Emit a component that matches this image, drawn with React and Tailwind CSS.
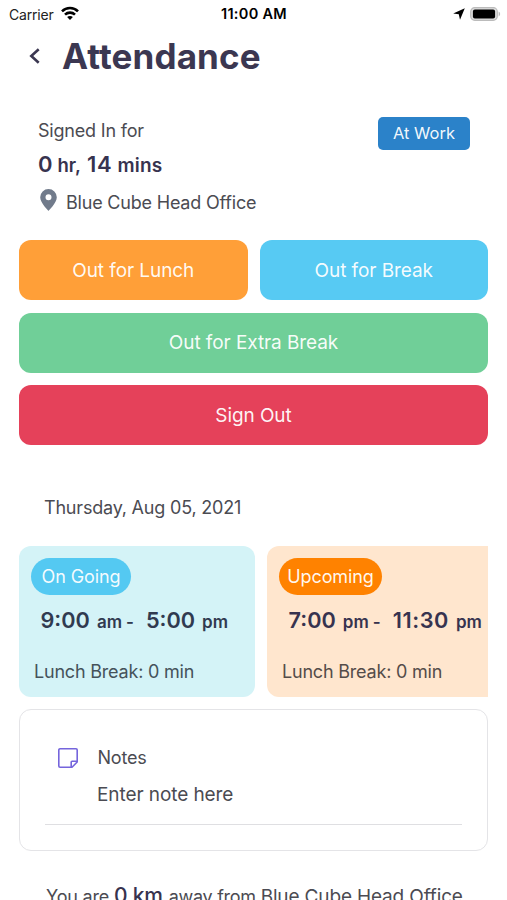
import React from "react";

function StatusBar() {
  return (
    <div className="grid h-7 grid-cols-[1fr_auto_1fr] items-center pl-[9px] pr-[6px] text-[14px] text-[#222]">
      <div className="flex items-center gap-[7px]">
        <span>Carrier</span>
        <svg className="-mt-[2px] h-[14px] w-[18px]" viewBox="0 0 18 14" fill="none" stroke="#000" strokeWidth="2.6">
          <path d="M1 5.3C5.4 .9 12.6 .9 17 5.3" />
          <path d="M4 8.6c2.8-2.7 7.2-2.7 10 0" />
          <path d="M9 14 6.1 11.1c1.6-1.6 4.2-1.6 5.8 0z" fill="#000" stroke="none" />
        </svg>
      </div>
      <span className="-ml-[2px] text-[14.5px] font-semibold tracking-[0.3px] text-black">11:00 AM</span>
      <div className="flex items-center justify-end gap-[5px]">
        <svg className="h-[12px] w-[12px]" viewBox="0 0 12 12">
          <path d="M11.8.2 7 11.8 5.8 6.3.2 5.5z" fill="#000" />
        </svg>
        <svg className="h-[14px] w-[31px]" viewBox="0 0 31 14">
          <rect x=".7" y=".7" width="26.6" height="12.6" rx="4" fill="#ddd" stroke="#bbb" strokeWidth="1.2" />
          <rect x="2.9" y="2.5" width="22.2" height="9" rx="2" fill="#000" />
          <path d="M28.6 4.6c2 .8 2 4 0 4.8z" fill="#bbb" />
        </svg>
      </div>
    </div>
  );
}

function Action({ className, children }) {
  return (
    <button className={"flex h-[60px] items-center justify-center rounded-xl pt-[2px] text-[19px] tracking-[-0.08px] text-white/95 " + className}>
      {children}
    </button>
  );
}

function Shift({ card, badge, label, from, fromUnit, to, toUnit, timeColor, textColor, toClass }) {
  return (
    <div className={"h-[151px] w-[236px] shrink-0 whitespace-nowrap rounded-xl pt-3 " + card}>
      <div className={"ml-3 flex h-[37px] items-center justify-center rounded-full text-[18px] tracking-[-0.1px] text-white/95 " + badge}>
        {label}
      </div>
      <div className={"ml-[21.5px] flex h-[51px] items-center font-semibold " + timeColor}>
        <div className="flex items-baseline text-[17px]">
          <span className="text-[21.7px]">{from}</span>
          <span className="ml-[7px]">{fromUnit}</span>
          <span className="ml-[4px]">-</span>
          <span className={"ml-[12px] text-[21.7px] " + toClass}>{to}</span>
          <span className="ml-[7px]">{toUnit}</span>
        </div>
      </div>
      <div className={"ml-[15px] flex h-[52px] items-center text-[18px] tracking-[-0.2px] " + textColor}>Lunch Break: 0 min</div>
    </div>
  );
}

export default function App() {
  return (
    <div className="h-[900px] w-[507px] overflow-hidden bg-white font-['Inter','Liberation_Sans',sans-serif] text-[18px] tracking-[-0.2px] text-[#4b4b52]">
      <StatusBar />
      <header className="flex h-14 items-center pl-[29px]">
        <svg className="h-4 w-[11px]" viewBox="0 0 11 16" fill="none" stroke="#3b3751" strokeWidth="2.6">
          <path d="M9.7 1.2 2.3 8l7.4 6.8" />
        </svg>
        <h1 className="ml-[22px] text-[35px] font-bold tracking-[0.12px] text-[#3b3751]">Attendance</h1>
      </header>

      <section className="mt-[27px] flex h-[116px] justify-between pl-[38px] pr-[37px]">
        <div>
          <p className="flex h-10 items-center pb-[2px]">Signed In for</p>
          <div className="flex h-[26px] items-center font-semibold tracking-[0px] text-[#37334f]">
            <div className="flex items-baseline text-[19px]">
              <span className="text-[22px]">0</span>
              <span className="ml-[5px] text-[18.5px]">hr,</span>
              <span className="ml-[6px] text-[22px] tracking-[0.8px]">14</span>
              <span className="ml-[5px] tracking-[0.2px]">mins</span>
            </div>
          </div>
          <div className="flex h-[50px] items-center pl-[2px]">
            <svg className="-mt-[5px] h-[22px] w-[17px]" viewBox="0 0 17 22">
              <path d="M8.5 0A8.3 8.3 0 0 0 .2 8.3C.2 14 8.5 22 8.5 22s8.3-8 8.3-13.7A8.3 8.3 0 0 0 8.5 0zm0 11.3a3 3 0 1 1 0-6 3 3 0 0 1 0 6z" fill="#717b8b" fillRule="evenodd" />
            </svg>
            <span className="ml-[9px]">Blue Cube Head Office</span>
          </div>
        </div>
        <div className="mt-[6px] flex h-[33px] w-[92px] items-center justify-center rounded-[5px] bg-[#2b82c9] text-[16.5px] tracking-[0px] text-white/95">
          At Work
        </div>
      </section>

      <section className="mx-[19px] mt-[13px] grid grid-cols-2 gap-x-3 gap-y-[12.5px]">
        <Action className="bg-[#ff9f38]">Out for Lunch</Action>
        <Action className="bg-[#57caf3]">Out for Break</Action>
        <Action className="col-span-2 bg-[#70cf98]">Out for Extra Break</Action>
        <Action className="col-span-2 bg-[#e5415a]">Sign Out</Action>
      </section>

      <p className="ml-[44px] mt-[42px] flex h-10 items-center">Thursday, Aug 05, 2021</p>

      <section className="mx-[19px] mt-[18.5px] flex gap-3 overflow-hidden tracking-[0px]">
        <Shift card="bg-[#d4f3f7]" badge="bg-[#54c9f2] w-[100px]" label="On Going" from="9:00" fromUnit="am" to="5:00" toUnit="pm" timeColor="text-[#303a50]" textColor="text-[#45525a]" toClass="" />
        <Shift card="bg-[#ffe6ce]" badge="bg-[#ff8200] w-[103px]" label="Upcoming" from="7:00" fromUnit="pm" to="11:30" toUnit="pm" timeColor="text-[#37334f]" textColor="text-[#544c49]" toClass="tracking-[0.6px]" />
      </section>

      <section className="mx-[19px] mt-[12.5px] h-[142px] rounded-xl border border-[#e4e4e7] px-[25px] pt-[28px]">
        <div className="flex h-10 items-center pl-[13px]">
          <svg className="h-5 w-5" viewBox="0 0 20 20" fill="none" stroke="#7565dc" strokeWidth="1.6" strokeLinejoin="round">
            <path d="M2 .8h16a1.2 1.2 0 0 1 1.2 1.2v12l-5.2 5.2H2A1.2 1.2 0 0 1 .8 18V2A1.2 1.2 0 0 1 2 .8zM13.2 19v-4.9c0-.5.4-.9.9-.9H19" />
          </svg>
          <span className="-mt-[2px] ml-[19.5px]">Notes</span>
        </div>
        <div className="flex h-[47px] items-center border-b border-[#dfdfe2] pb-[12px] pl-[52px] text-[19px] tracking-[-0.08px]">Enter note here</div>
      </section>

      <p className="mt-[31px] flex items-baseline whitespace-pre pl-[46px] leading-[28px]">
        <span>You are</span>
        <span className="ml-[5px] text-[21px] font-medium text-[#37334f]">0 km</span>
        <span className="ml-[6px] tracking-[-0.3px]">away from</span>
        <span className="ml-[5px] text-[19px] tracking-[-0.15px]">Blue Cube Head Office</span>
      </p>
    </div>
  );
}
